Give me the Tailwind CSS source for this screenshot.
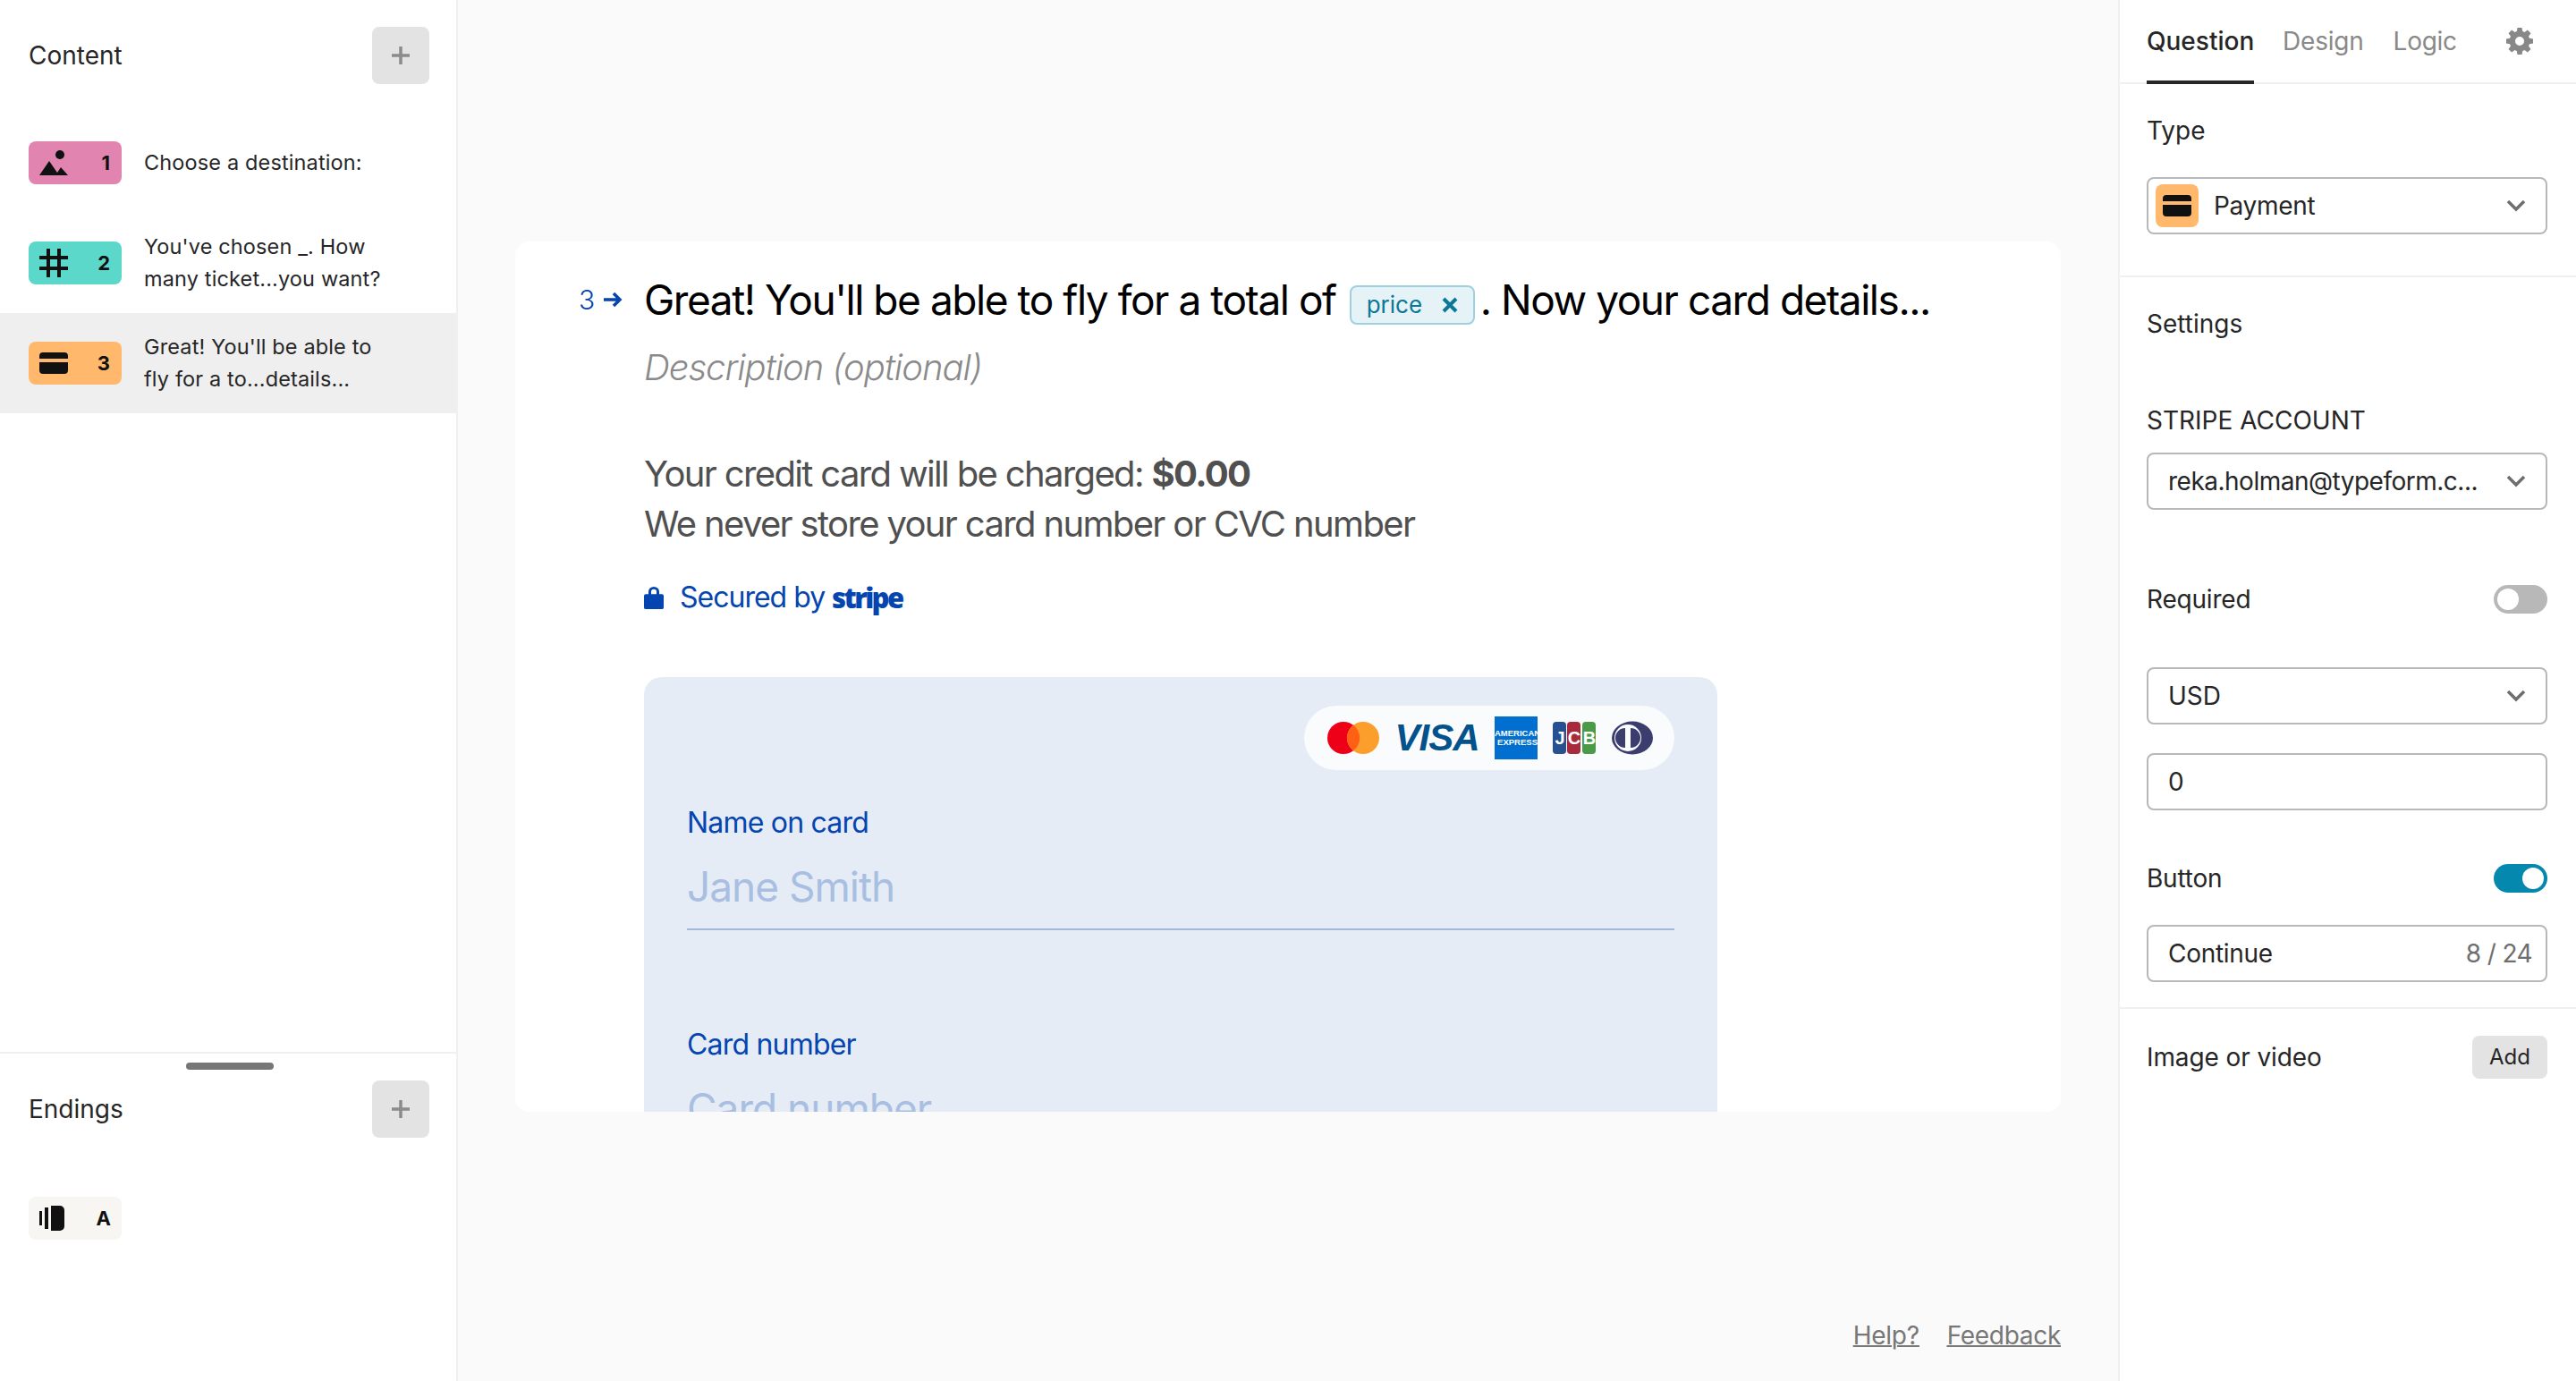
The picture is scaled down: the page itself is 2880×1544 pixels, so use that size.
<!DOCTYPE html>
<html lang="en">
<head>
  <meta charset="UTF-8">
  <title>Form builder</title>
  <script src="https://cdn.jsdelivr.net/npm/@tailwindcss/browser@4"></script>
</head>
<body class="bg-[#fafafa] font-['Inter',sans-serif] text-[#262627] overflow-hidden">
  <div class="flex w-[2880px] h-[1544px]">

    <!-- Left sidebar -->
    <aside class="w-[512px] shrink-0 h-full bg-white border-r-2 border-[#f0f0f0] flex flex-col">
      <div class="h-[1176px] shrink-0">
        <div class="flex items-center justify-between pl-8 pr-[30px] pt-[30px]">
          <span class="text-[28px] leading-[64px]">Content</span>
          <button class="w-16 h-16 rounded-lg bg-[#e3e3e3] flex items-center justify-center">
            <svg width="20" height="20" viewBox="0 0 20 20"><path d="M10 0v20M0 10h20" stroke="#8b8b8b" stroke-width="3.5"/></svg>
          </button>
        </div>
        <div class="mt-[32px]">
          <div class="h-[112px] flex items-center pl-8 gap-[25px]">
            <div class="w-[104px] h-12 rounded-lg bg-[#e185b0] flex items-center justify-between pl-3 pr-[13px]">
              <svg width="32" height="28" viewBox="0 0 32 28"><circle cx="23" cy="5" r="5" fill="#111"/><path d="M0 28 L11 12 L20 25 L24 19 L32 28Z" fill="#111"/></svg>
              <span class="text-[22px] font-bold text-[#111]">1</span>
            </div>
            <span class="text-[23.5px] leading-9 tracking-[0.14px]">Choose a destination:</span>
          </div>
          <div class="h-[112px] flex items-center pl-8 gap-[25px]">
            <div class="w-[104px] h-12 rounded-lg bg-[#5bd8ca] flex items-center justify-between pl-3 pr-[13px]">
              <svg width="32" height="32" viewBox="0 0 32 32"><path d="M10 1v30M22 1v30M0 10h32M0 22h32" stroke="#111" stroke-width="4" stroke-linecap="round"/></svg>
              <span class="text-[22px] font-bold text-[#111]">2</span>
            </div>
            <span class="text-[23.5px] leading-9 tracking-[0.14px] w-[280px]">You've chosen _. How many ticket...you want?</span>
          </div>
          <div class="h-[112px] flex items-center pl-8 gap-[25px] bg-[#efefef]">
            <div class="w-[104px] h-12 rounded-lg bg-[#ffb86c] flex items-center justify-between pl-3 pr-[13px]">
              <svg width="32" height="24" viewBox="0 0 32 24"><path d="M4 0h24a4 4 0 0 1 4 4v3H0V4a4 4 0 0 1 4-4ZM0 11h32v9a4 4 0 0 1-4 4H4a4 4 0 0 1-4-4Z" fill="#111"/></svg>
              <span class="text-[22px] font-bold text-[#111]">3</span>
            </div>
            <span class="text-[23.5px] leading-9 tracking-[0.14px] w-[280px]">Great! You'll be able to fly for a to...details...</span>
          </div>
        </div>
      </div>
      <div class="border-t-2 border-[#f0f0f0] flex-1 relative">
        <div class="absolute left-[208px] top-[10px] w-[98px] h-2 rounded-full bg-[#777]"></div>
        <div class="flex items-center justify-between pl-8 pr-[30px] pt-[30px]">
          <span class="text-[28px] leading-[64px]">Endings</span>
          <button class="w-16 h-16 rounded-lg bg-[#e3e3e3] flex items-center justify-center">
            <svg width="20" height="20" viewBox="0 0 20 20"><path d="M10 0v20M0 10h20" stroke="#8b8b8b" stroke-width="3.5"/></svg>
          </button>
        </div>
        <div class="pl-8 mt-[66px]">
          <div class="w-[104px] h-12 rounded-lg bg-[#f7f6f2] flex items-center justify-between pl-3 pr-3">
            <svg width="28" height="28" viewBox="0 0 28 28"><path d="M0 6h3v16H0ZM6 2h4v24H6ZM13 0h10a5 5 0 0 1 5 5v18a5 5 0 0 1-5 5H13Z" fill="#111"/></svg>
            <span class="text-[22px] font-bold text-[#111]">A</span>
          </div>
        </div>
      </div>
    </aside>

    <!-- Center -->
    <main class="flex-1 h-full flex flex-col pl-[64px] pr-[64px]">
      <div class="mt-[270px] h-[973px] bg-white rounded-2xl overflow-hidden pl-[71px] pt-[36px] w-[1728px] shrink-0">
        <div class="flex items-start">
          <div class="w-[73px] shrink-0 flex items-center gap-[9px] h-[58px] text-[#0445af] text-[30px]">
            <span class="font-light">3</span>
            <svg width="22" height="18" viewBox="0 0 22 18"><path d="M1 9h18M12 2l7 7-7 7" fill="none" stroke="#0445af" stroke-width="3.5"/></svg>
          </div>
          <h1 class="text-[46px] leading-[58px] text-black font-normal whitespace-nowrap flex items-center tracking-[-1.45px]">Great! You'll be able to fly for a total of
            <span class="ml-[15px] mr-[6px] inline-flex items-center h-11 mt-[12px] w-[140px] justify-between pl-[17px] pr-[17px] rounded-lg bg-[#e5f2f6] border-2 border-[#9dd1e1] text-[26px] text-[#0b7796] font-normal tracking-normal">price
              <svg width="18" height="18" viewBox="0 0 18 18"><path d="M2 2l14 14M16 2L2 16" stroke="#0b7796" stroke-width="4"/></svg>
            </span>. Now your card details...</h1>
        </div>
        <div class="pl-[73px]">
          <p class="text-[40px] leading-[52px] italic font-light text-[#8a8a8a] mt-[21px] tracking-[-1px]">Description (optional)</p>
          <p class="text-[40px] leading-[56px] text-[#505050] font-normal mt-[65px] tracking-[-1.65px]">Your credit card will be charged: <b class="font-bold">$0.00</b></p>
          <p class="text-[40px] leading-[56px] text-[#505050] font-normal tracking-[-1.65px]">We never store your card number or CVC number</p>
          <div class="flex items-center mt-[26px] h-[56px] text-[#0445af] text-[32px] font-normal tracking-[-1px]">
            <svg class="mr-[18px]" width="22" height="26" viewBox="0 0 22 28" preserveAspectRatio="none"><path d="M5 10V7a6 6 0 0 1 12 0v3h3a2 2 0 0 1 2 2v14a2 2 0 0 1-2 2H2a2 2 0 0 1-2-2V12a2 2 0 0 1 2-2Zm3 0h6V7a3 3 0 0 0-6 0Z" fill="#0445af"/></svg>
            <span>Secured by</span><span class="ml-2 font-black font-['Noto_Sans',sans-serif] tracking-[-2.6px] text-[31px]">stripe</span>
          </div>
          <div class="mt-[61px] w-[1200px] h-[600px] bg-[#e5ecf6] rounded-[20px] px-12 pt-8">
            <div class="flex justify-end">
              <div class="h-[72px] w-[414px] bg-[#fafbfd] rounded-full flex items-center pl-[26px] pr-[24px] justify-between">
                <svg width="58" height="36" viewBox="0 0 58 36"><circle cx="18" cy="18" r="18" fill="#ee0018"/><circle cx="40" cy="18" r="18" fill="#fb9e2c"/><path d="M29 3.6a18 18 0 0 1 0 28.8a18 18 0 0 1 0-28.8Z" fill="#ff6016"/></svg>
                <span class="text-[#03528c] text-[42px] font-black italic font-['Liberation_Sans',sans-serif] tracking-[-1px] leading-none">VISA</span>
                <div class="w-12 h-12 bg-[#016fd0] flex flex-col justify-center font-bold text-[9.5px] leading-[10px] text-white font-['Liberation_Sans',sans-serif]">
                  <span>AMERICAN</span><span class="text-right">EXPRESS</span>
                </div>
                <svg width="48" height="36" viewBox="0 0 48 36" font-family="Liberation Sans" font-weight="700" font-size="20" fill="#fff" text-anchor="middle">
                  <rect x="0" y="0" width="15" height="36" rx="4" fill="#26508f"/><rect x="16" y="0" width="15" height="36" rx="4" fill="#a72b3c"/><rect x="33" y="0" width="15" height="36" rx="4" fill="#4b9a48"/>
                  <text x="8" y="25">J</text><text x="24" y="25">C</text><text x="41" y="25">B</text>
                </svg>
                <svg width="46" height="38" viewBox="0 0 46 38"><ellipse cx="23" cy="19" rx="23" ry="18.5" fill="#3a3d6e"/><circle cx="18" cy="19" r="15" fill="#fafbfd"/><path d="M15 8a11 11 0 0 0 0 22ZM21 8a11 11 0 0 1 0 22Z" fill="#3a3d6e"/></svg>
              </div>
            </div>
            <p class="text-[#0445af] text-[32px] font-normal mt-[37px] leading-[44px] tracking-[-0.8px]">Name on card</p>
            <div class="border-b-2 border-[#a3b8dc] h-[80px] mt-[18px] text-[46px] leading-[62px] text-[#a9bfe2] font-normal tracking-[-1px]">Jane Smith</div>
            <p class="text-[#0445af] text-[32px] font-normal mt-[106px] leading-[44px] tracking-[-0.8px]">Card number</p>
            <div class="h-[76px] mt-[18px] text-[46px] leading-[62px] text-[#a9bfe2] font-normal tracking-[-1px]">Card number</div>
          </div>
        </div>
      </div>
      <div class="flex justify-end gap-[31px] mt-[230px] text-[28px] leading-10 text-[#777] underline decoration-2 font-normal tracking-[-0.3px] w-[1728px]">
        <a>Help?</a><a>Feedback</a>
      </div>
    </main>

    <!-- Right sidebar -->
    <aside class="w-[512px] shrink-0 h-full bg-white border-l-2 border-[#f0f0f0]">
      <div class="h-[94px] border-b-2 border-[#f0f0f0] flex pl-[30px] relative">
        <div class="w-[120px] h-[94px] border-b-4 border-[#262627] font-medium text-[28px] leading-[92px] text-center">Question</div>
        <span class="ml-[32px] text-[28px] leading-[92px] text-[#898989] tracking-[-0.2px]">Design</span>
        <span class="ml-[33px] text-[28px] leading-[92px] text-[#898989] tracking-[-0.3px]">Logic</span>
        <svg class="absolute left-[432px] top-[31px]" width="30" height="30" viewBox="0 0 24 24"><path fill="#888" fill-rule="evenodd" d="M10 0h4l.6 3.2 1.8.8L19.1 2 22 4.9 20 7.6l.8 1.8L24 10v4l-3.2.6-.8 1.8 2 2.7-2.9 2.9-2.7-2-1.8.8L14 24h-4l-.6-3.2-1.8-.8-2.7 2L2 19.1l2-2.7-.8-1.8L0 14v-4l3.2-.6L4 7.6 2 4.9 4.9 2l2.7 2 1.8-.8ZM12 8a4 4 0 1 0 0 8 4 4 0 0 0 0-8Z"/></svg>
      </div>
      <div class="h-[216px] border-b-2 border-[#f0f0f0] pl-[30px] pr-[32px] pt-[32px]">
        <p class="text-[28px] leading-10">Type</p>
        <div class="mt-[32px] h-16 rounded-lg border-2 border-[#b8b8b8] flex items-center pl-2 pr-[22px]">
          <div class="w-12 h-12 rounded-lg bg-[#ffb86c] flex items-center justify-center">
            <svg width="32" height="24" viewBox="0 0 32 24"><path d="M4 0h24a4 4 0 0 1 4 4v3H0V4a4 4 0 0 1 4-4ZM0 11h32v9a4 4 0 0 1-4 4H4a4 4 0 0 1-4-4Z" fill="#111"/></svg>
          </div>
          <span class="ml-[17px] text-[28px] flex-1 tracking-[-0.3px]">Payment</span>
          <svg width="22" height="14" viewBox="0 0 22 14"><path d="M2 2l9 9 9-9" fill="none" stroke="#6e6e6e" stroke-width="3.5"/></svg>
        </div>
      </div>
      <div class="h-[818px] border-b-2 border-[#f0f0f0] pl-[30px] pr-[32px] pt-[32px]">
        <p class="text-[28px] leading-10">Settings</p>
        <p class="text-[28px] leading-10 mt-[68px]">STRIPE ACCOUNT</p>
        <div class="mt-[16px] h-16 rounded-lg border-2 border-[#b8b8b8] flex items-center pl-[22px] pr-[22px]">
          <span class="text-[28px] flex-1 tracking-[-0.5px]">reka.holman@typeform.c...</span>
          <svg width="22" height="14" viewBox="0 0 22 14"><path d="M2 2l9 9 9-9" fill="none" stroke="#6e6e6e" stroke-width="3.5"/></svg>
        </div>
        <div class="mt-[84px] h-8 flex items-center justify-between">
          <span class="text-[28px] tracking-[-0.2px]">Required</span>
          <div class="w-[60px] h-8 rounded-full bg-[#b8b8b8] flex items-center justify-start px-1">
            <div class="w-6 h-6 rounded-full bg-white"></div>
          </div>
        </div>
        <div class="mt-[60px] h-16 rounded-lg border-2 border-[#b8b8b8] flex items-center pl-[22px] pr-[22px]">
          <span class="text-[28px] flex-1">USD</span>
          <svg width="22" height="14" viewBox="0 0 22 14"><path d="M2 2l9 9 9-9" fill="none" stroke="#6e6e6e" stroke-width="3.5"/></svg>
        </div>
        <div class="mt-8 h-16 rounded-lg border-2 border-[#b8b8b8] flex items-center pl-[22px] pr-[20px]">
          <span class="text-[28px]">0</span>
        </div>
        <div class="mt-[60px] h-8 flex items-center justify-between">
          <span class="text-[28px] tracking-[-0.2px]">Button</span>
          <div class="w-[60px] h-8 rounded-full bg-[#0588ae] flex items-center justify-end px-1">
            <div class="w-6 h-6 rounded-full bg-white"></div>
          </div>
        </div>
        <div class="mt-9 h-16 rounded-lg border-2 border-[#b8b8b8] flex items-center justify-between pl-[22px] pr-[15px]">
          <span class="text-[28px] tracking-[-0.3px]">Continue</span>
          <span class="text-[28px] text-[#6e6e6e] tracking-[-0.6px]">8 / 24</span>
        </div>
      </div>
      <div class="flex items-center justify-between pl-[30px] pr-[32px] pt-[30px]">
        <span class="text-[28px] tracking-[-0.1px]">Image or video</span>
        <button class="w-[84px] h-12 rounded-lg bg-[#e3e3e3] text-[24px] text-[#262627]">Add</button>
      </div>
    </aside>
  </div>
</body>
</html>
